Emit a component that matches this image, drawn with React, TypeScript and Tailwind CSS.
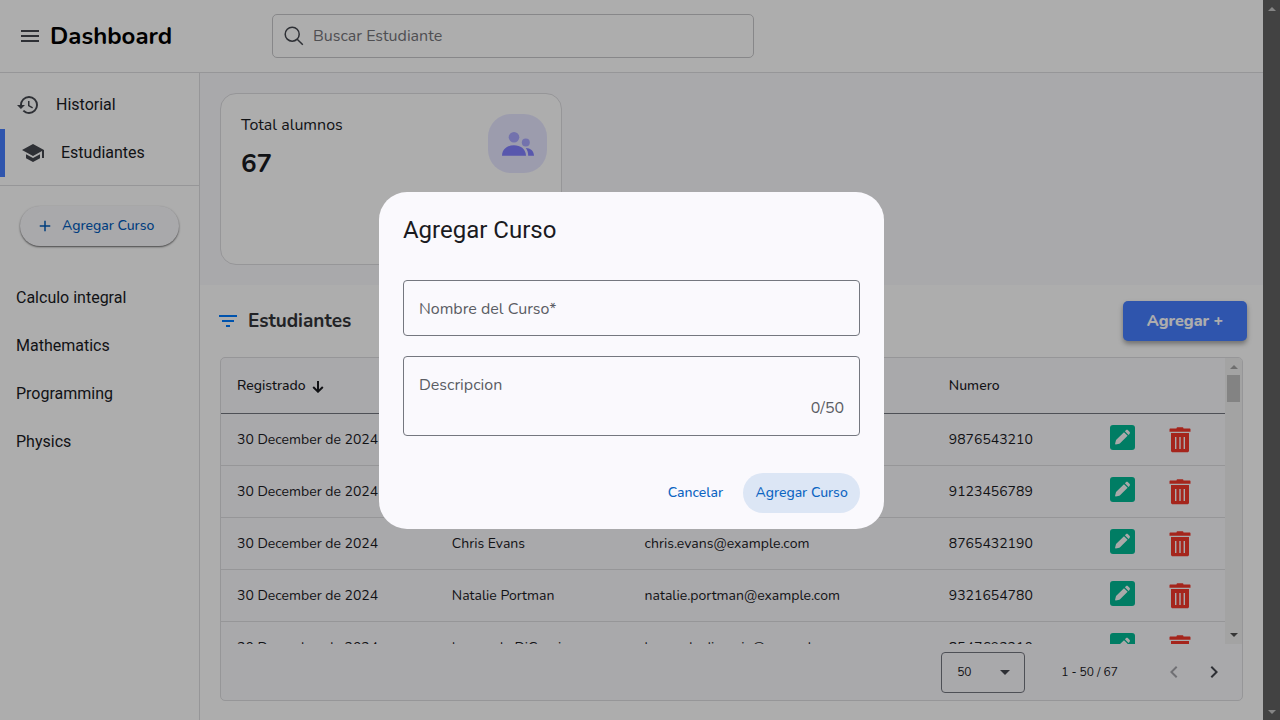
import { useState } from "react";
import { MdAdd, MdArrowDropDown, MdChevronLeft, MdChevronRight, MdFilterList, MdHistory, MdMenu, MdSchool } from "react-icons/md";

type Student = { date: string; name: string; email: string; phone: string };

const students: Student[] = [
  { date: "30 December de 2024", name: "Robert Downey", email: "robert.downey@example.com", phone: "9876543210" },
  { date: "30 December de 2024", name: "Emma Stone", email: "emma.stone@example.com", phone: "9123456789" },
  { date: "30 December de 2024", name: "Chris Evans", email: "chris.evans@example.com", phone: "8765432190" },
  { date: "30 December de 2024", name: "Natalie Portman", email: "natalie.portman@example.com", phone: "9321654780" },
  { date: "30 December de 2024", name: "Leonardo DiCaprio", email: "leonardo.dicaprio@example.com", phone: "8547693210" },
];

const courses = ["Calculo integral", "Mathematics", "Programming", "Physics"];

function SearchIcon() {
  return (
    <svg viewBox="0 0 20 20" className="size-5 shrink-0 text-[#44474e]" fill="none" stroke="currentColor" strokeWidth="1.5">
      <circle cx="8.2" cy="8.2" r="7" />
      <path d="M13.2 13.2l5.6 5.6" />
    </svg>
  );
}

function PeopleIcon() {
  return (
    <svg viewBox="0 0 32 24" className="h-6 w-8" fill="#8280ff">
      <circle cx="12" cy="5.3" r="5.3" fillOpacity="0.6" />
      <circle cx="23.8" cy="10.6" r="4" fillOpacity="0.6" />
      <path d="M0 23.4C.5 16.8 5.6 13.3 12 13.3S23.5 16.8 24 23.4a.3.3 0 01-.3.3H.3a.3.3 0 01-.3-.3z" />
      <path d="M23.8 16C28.6 16.1 31.6 18.7 32 23.4a.3.3 0 01-.3.3h-5.5C26.2 20.8 25.4 18.2 23.8 16z" />
    </svg>
  );
}

function PencilIcon() {
  return (
    <svg viewBox="0 0 25 25" className="size-[25px]">
      <rect width="25" height="25" rx="3" fill="#00b894" />
      <path
        fill="#fafafa"
        d="M14 7.200l3.600 3.600-7.300 7.300c-.3.300-.7.500-1.100.6l-3.300.8c-.5.100-.9-.3-.8-.8l.8-3.200c.1-.4.300-.8.600-1.100zM14.900 6.300l1-1c.6-.6 1.500-.6 2.100 0l1.500 1.500c.6.600.6 1.500 0 2.100l-1 1z"
      />
    </svg>
  );
}

function TrashIcon() {
  return (
    <svg viewBox="0 0 22 26" className="h-[26px] w-[22px]">
      <path fill="#f3372a" d="M7.5 1.500C7.5.6 8 .3 8.800.3h4.400c.8 0 1.300.3 1.300 1.200h6c.7 0 1 .4 1 1V4.700H.5V2.500c0-.6.3-1 1-1z" />
      <path fill="#f3372a" d="M2 6h18v17.500c0 1.100-.7 1.800-1.800 1.800H3.800C2.700 25.300 2 24.600 2 23.500z" />
      <path stroke="#faf9fd" strokeWidth="1.400" d="M6.700 10v12M11 10v12M15.300 10v12" />
    </svg>
  );
}

function Header() {
  return (
    <header className="flex h-[73px] items-center border-b border-[#dddde0] bg-white">
      <div className="flex w-[272px] shrink-0 items-center gap-2 pl-[18px]">
        <button type="button" aria-label="Menu" className="text-[#44474e]">
          <MdMenu className="size-6" />
        </button>
        <h1 className="text-2xl font-bold text-black">Dashboard</h1>
      </div>
      <div className="flex h-11 w-[482px] items-center gap-[9px] rounded-[5px] border border-[#c8c8cb] px-[11px]">
        <SearchIcon />
        <input type="search" aria-label="Buscar Estudiante" placeholder="Buscar Estudiante" className="min-w-0 flex-1 bg-transparent text-base outline-none placeholder:text-[#75757a]" />
      </div>
    </header>
  );
}

function Sidebar() {
  return (
    <nav className="w-[200px] shrink-0 border-r border-[#dddde0] bg-white font-['Roboto',sans-serif] text-base text-[#1a1b1f]">
      <div className="border-b border-[#dddde0] py-2">
        <a href="#historial" className="flex h-12 items-center gap-4 pl-4">
          <MdHistory className="size-6 text-[#44474e]" />
          Historial
        </a>
        <a href="#estudiantes" className="flex h-12 items-center gap-4 border-l-[5px] border-[#467eff] pl-4">
          <MdSchool className="size-6 text-[#44474e]" />
          Estudiantes
        </a>
      </div>
      <div className="px-5 py-5">
        <button type="button" className="flex h-10 w-full items-center gap-2 rounded-full bg-[#faf9fd] pl-4 font-['Nunito','Open_Sans',sans-serif] text-sm leading-[22px] font-medium text-[#005cbb] shadow-[0_1px_2px_rgba(0,0,0,0.6)]">
          <MdAdd className="size-[18px]" />
          Agregar Curso
        </button>
      </div>
      <ul className="pt-2">
        {courses.map((course) => (
          <li key={course}>
            <a href="#curso" className="flex h-12 items-center px-4">{course}</a>
          </li>
        ))}
      </ul>
    </nav>
  );
}

function InnerScrollbar() {
  return (
    <div className="flex w-[17px] shrink-0 flex-col items-center bg-[#f1f1f1] py-[7px]" aria-hidden="true">
      <svg viewBox="0 0 8 4" className="h-1 w-2" fill="#a3a3a3"><path d="M0 4l4-4 4 4z" /></svg>
      <div className="mt-[6px] h-[27px] w-[13px] bg-[#c1c1c1]" />
      <svg viewBox="0 0 8 4" className="mt-auto h-1 w-2" fill="#505050"><path d="M0 0l4 4 4-4z" /></svg>
    </div>
  );
}

function StudentsTable() {
  return (
    <div className="mx-5 mb-5 overflow-hidden rounded-[5px] border border-[#dddde0] bg-[#faf9fd] text-sm text-[#1a1b1f]">
      <div className="flex h-[286px] overflow-hidden">
        <div className="min-w-0 flex-1 overflow-hidden">
          <table className="w-full table-fixed border-separate border-spacing-0 text-left">
            <colgroup>
              <col className="w-[21.4%]" />
              <col className="w-[19.2%]" />
              <col className="w-[30.3%]" />
              <col className="w-[16.1%]" />
              <col className="w-[5.8%]" />
              <col />
            </colgroup>
            <thead>
              <tr className="h-14 *:border-b *:border-[#74777f] *:px-4 *:font-medium">
                <th>
                  <span className="flex items-center gap-[6px]">
                    Registrado
                    <svg viewBox="0 0 12 14" className="h-[14px] w-3" fill="none" stroke="currentColor" strokeWidth="2"><path d="M6 2v10.500M1.200 8L6 12.700 10.800 8" /></svg>
                  </span>
                </th>
                <th>Nombre</th>
                <th>Email</th>
                <th>Numero</th>
                <th />
                <th />
              </tr>
            </thead>
            <tbody>
              {students.map((s) => (
                <tr key={s.email} className="h-[52px] *:border-b *:border-[#dddde0] *:px-4 *:whitespace-nowrap">
                  <td>{s.date}</td>
                  <td>{s.name}</td>
                  <td>{s.email}</td>
                  <td>{s.phone}</td>
                  <td><button type="button" aria-label="Editar" className="block pb-1"><PencilIcon /></button></td>
                  <td><button type="button" aria-label="Eliminar" className="block"><TrashIcon /></button></td>
                </tr>
              ))}
            </tbody>
          </table>
        </div>
        <InnerScrollbar />
      </div>
      <div className="flex h-14 items-center justify-end pr-2 text-xs">
        <div className="relative">
          <select aria-label="Filas" defaultValue="50" className="h-[41px] w-[84px] appearance-none rounded border border-[#74777f] bg-transparent pl-[15px]">
            <option>50</option>
          </select>
          <MdArrowDropDown className="pointer-events-none absolute top-2 right-2 size-6 text-[#44474e]" />
        </div>
        <span className="mx-9">1 - 50 / 67</span>
        <button type="button" aria-label="Anterior" disabled className="grid size-10 place-items-center text-[#a6a6ab]"><MdChevronLeft className="size-6" /></button>
        <button type="button" aria-label="Siguiente" className="grid size-10 place-items-center text-[#44474e]"><MdChevronRight className="size-6" /></button>
      </div>
    </div>
  );
}

function CourseDialog() {
  const [name, setName] = useState("");
  const [description, setDescription] = useState("");
  return (
    <div className="absolute inset-0 flex items-center justify-center bg-black/32">
      <form role="dialog" aria-labelledby="dialog-title" className="w-2/5 rounded-[28px] bg-[#faf9fd] px-6 pt-5 pb-4">
        <h2 id="dialog-title" className="font-['Roboto',sans-serif] text-2xl leading-9 text-[#1a1b1f]">Agregar Curso</h2>
        <div className="relative mt-8 h-14 rounded border border-[#74777f]">
          {!name && <label htmlFor="name" className="pointer-events-none absolute top-4 left-[15px] text-base text-[#5a5d64]">Nombre del Curso*</label>}
          <input id="name" value={name} onChange={(e) => setName(e.target.value)} className="size-full bg-transparent px-[15px] text-base outline-none" />
        </div>
        <div className="relative mt-5 flex h-20 flex-col rounded border border-[#74777f] px-[15px] pt-4 pb-[15px]">
          {!description && <label htmlFor="description" className="pointer-events-none absolute top-4 left-[15px] text-base text-[#5a5d64]">Descripcion</label>}
          <textarea id="description" maxLength={50} value={description} onChange={(e) => setDescription(e.target.value)} className="h-6 resize-none bg-transparent text-base outline-none" />
          <span className="text-right text-base text-[#5a5d64]">{description.length}/50</span>
        </div>
        <div className="mt-[37px] flex justify-end gap-2 text-sm font-medium text-[#0d65c2]">
          <button type="button" className="h-10 rounded-full px-3">Cancelar</button>
          <button type="submit" className="h-10 w-[117px] rounded-full bg-[#dce6f5]">Agregar Curso</button>
        </div>
      </form>
    </div>
  );
}

export default function App() {
  return (
    <div className="flex min-h-screen bg-white font-['Nunito','Open_Sans',sans-serif]">
      <div className="relative flex min-w-0 flex-1 flex-col">
        <Header />
        <div className="flex flex-1">
          <Sidebar />
          <main className="flex min-w-0 flex-1 flex-col">
            <section className="bg-[#faf9fd] p-5">
              <article className="flex h-[172px] w-[342px] items-start justify-between rounded-2xl border border-[#dddde0] bg-white py-5 pr-[14px] pl-5 text-[#1a1b1f]">
                <div>
                  <h3 className="text-base leading-[22px]">Total alumnos</h3>
                  <p className="mt-3 text-[26px] leading-8 font-bold">67</p>
                </div>
                <div className="grid size-[59px] place-items-center rounded-[23px] bg-[#8280ff]/20"><PeopleIcon /></div>
              </article>
            </section>
            <section className="flex-1 bg-white">
              <div className="flex items-center justify-between p-4">
                <div className="flex items-center gap-2">
                  <button type="button" aria-label="Filtrar" className="text-[#007bff]"><MdFilterList className="size-6" /></button>
                  <h2 className="text-[19px] leading-7 font-bold text-[#333438]">Estudiantes</h2>
                </div>
                <button type="button" className="h-10 w-[124px] rounded-[5px] bg-[#467eff] text-base font-extrabold text-white shadow-[0_3px_5px_rgba(0,0,0,0.35)]">Agregar +</button>
              </div>
              <StudentsTable />
            </section>
          </main>
        </div>
        <CourseDialog />
      </div>
      <div className="flex w-[17px] shrink-0 flex-col items-center justify-between bg-[#424242] py-[7px]" aria-hidden="true">
        <svg viewBox="0 0 8 4" className="h-1 w-2" fill="#858585"><path d="M0 4l4-4 4 4z" /></svg>
        <svg viewBox="0 0 8 4" className="h-1 w-2" fill="#858585"><path d="M0 0l4 4 4-4z" /></svg>
      </div>
    </div>
  );
}
